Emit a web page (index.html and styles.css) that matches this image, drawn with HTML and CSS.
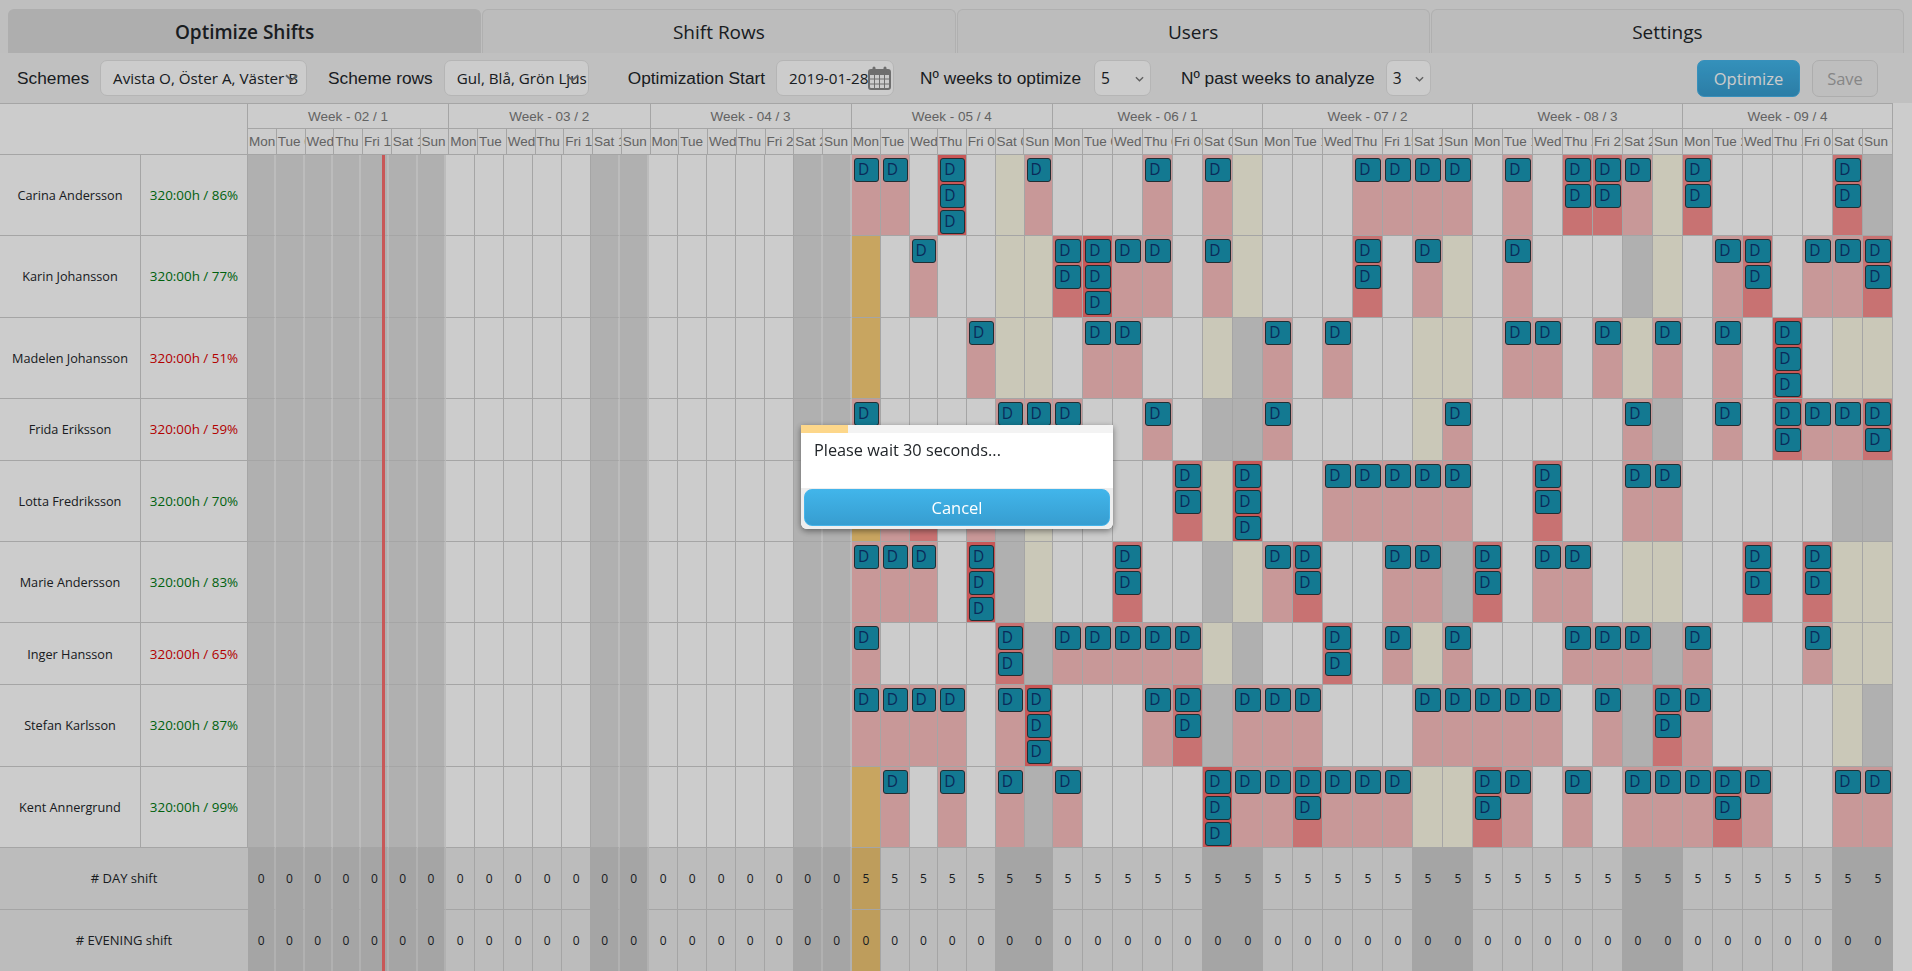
FILE: index.html
```html
<!DOCTYPE html>
<html lang="en">
<head>
    <meta charset="UTF-8">
    <meta name="viewport" content="width=device-width, initial-scale=1.0">
    <title>Optimize Shifts</title>
    <link rel="stylesheet" href="styles.css">
</head>
<body>
    <nav class="tabs">
        <a class="tab active">Optimize Shifts</a>
        <a class="tab">Shift Rows</a>
        <a class="tab">Users</a>
        <a class="tab">Settings</a>
    </nav>
    <div class="toolbar">
        <label class="label">Schemes</label>
        <div class="multi multi-schemes">
            <span class="multi-text">Avista O, Öster A, Väster B</span>
            <svg class="chevron" viewBox="0 0 14 8"><path d="M1 1l6 5.5L13 1" fill="none" stroke="#777" stroke-width="2"/></svg>
        </div>
        <label class="label">Scheme rows</label>
        <div class="multi multi-rows">
            <span class="multi-text">Gul, Blå, Grön Ljus</span>
            <svg class="chevron" viewBox="0 0 14 8"><path d="M1 1l6 5.5L13 1" fill="none" stroke="#777" stroke-width="2"/></svg>
        </div>
        <label class="label">Optimization Start</label>
        <div class="date">
            <span class="date-text">2019-01-28</span>
            <svg class="calendar" viewBox="0 0 23 24">
                <rect x="1" y="4" width="21" height="19" rx="2" fill="#fff" stroke="#8a8a8a" stroke-width="2"/>
                <rect x="1" y="4" width="21" height="5" fill="#8a8a8a"/>
                <rect x="4.5" y="0.5" width="3" height="6" rx="1.5" fill="#8a8a8a"/>
                <rect x="15.5" y="0.5" width="3" height="6" rx="1.5" fill="#8a8a8a"/>
                <path d="M1 13h21M1 18h21M6.5 9v14M11.5 9v14M16.5 9v14" stroke="#8a8a8a" stroke-width="1"/>
            </svg>
        </div>
        <label class="label">Nº weeks to optimize</label>
        <div class="select select-weeks">5
            <svg class="select-arrow" viewBox="0 0 10 6"><path d="M1 1l4 4 4-4" fill="none" stroke="#777" stroke-width="1.5"/></svg>
        </div>
        <label class="label">Nº past weeks to analyze</label>
        <div class="select select-past">3
            <svg class="select-arrow" viewBox="0 0 10 6"><path d="M1 1l4 4 4-4" fill="none" stroke="#777" stroke-width="1.5"/></svg>
        </div>
        <button class="btn btn-blue btn-optimize">Optimize</button>
        <button class="btn btn-save" disabled>Save</button>
    </div>
    <div class="schedule" id="schedule">
        <div class="now-line"></div>
    </div>
    <div class="overlay">
        <div class="dialog">
            <div class="progress"><div class="progress-fill"></div></div>
            <p class="dialog-text">Please wait 30 seconds...</p>
            <div class="dialog-actions">
                <button class="btn btn-blue btn-cancel">Cancel</button>
            </div>
        </div>
    </div>
    <script src="schedule.js"></script>
</body>
</html>
```

FILE: styles.css
```css
html, body {
    height: 100%;
    overflow: hidden;
}
body {
    font-family: "Open Sans", sans-serif;
    margin: 0;
    padding: 0;
    background-color: #fff;
    color: #212529;
}
.tabs {
    display: grid;
    grid-template-columns: repeat(4, 1fr);
    gap: 1px;
    height: 53px;
    padding: 9px 8px 0;
    box-sizing: border-box;
    background-color: #efefef;
}
.tab {
    display: flex;
    align-items: center;
    justify-content: center;
    font-size: 19px;
    border: 1px solid #dcdcdc;
    border-bottom: none;
    border-radius: 6px 6px 0 0;
    background-color: #ebebeb;
}
.tab.active {
    font-weight: 600;
    background-color: #dadada;
    border-color: #dadada;
}
.toolbar {
    display: flex;
    align-items: center;
    height: 50px;
    padding-left: 17px;
    box-sizing: border-box;
    background-color: #f1f1f1;
}
.label {
    font-family: "Liberation Sans", Arial, sans-serif;
    font-size: 17.3px;
    margin-right: 11px;
    white-space: nowrap;
}
.multi, .date, .select {
    position: relative;
    height: 36px;
    box-sizing: border-box;
    background-color: #fff;
    border: 1px solid #e3e3e3;
    border-radius: 7px;
    font-size: 15.2px;
    display: flex;
    align-items: center;
}
.multi-schemes {
    width: 207px;
    margin-right: 21px;
}
.multi-rows {
    width: 145px;
    margin-right: 39px;
}
.multi-text {
    padding-left: 12px;
    white-space: nowrap;
    overflow: hidden;
}
.chevron {
    position: absolute;
    right: 8px;
    top: 13px;
    width: 13px;
    height: 8px;
}
.multi-rows .chevron {
    right: 9px;
}
.date {
    width: 118px;
    margin-right: 26px;
    overflow: hidden;
}
.date-text {
    padding-left: 12px;
    white-space: nowrap;
}
.calendar {
    position: absolute;
    right: 2px;
    top: 5px;
    width: 23px;
    height: 24px;
}
.select {
    font-size: 15.5px;
    padding-left: 6px;
}
.select-arrow {
    position: absolute;
    right: 6px;
    top: 15px;
    width: 9px;
    height: 6px;
}
.select-weeks {
    width: 57px;
    margin-left: 2px;
    margin-right: 30px;
}
.select-past {
    width: 45px;
}
.btn {
    font-family: "Open Sans", sans-serif;
    font-size: 16.5px;
    height: 37px;
    border-radius: 7px;
    cursor: pointer;
}
.btn-blue {
    color: #fff;
    border: 1px solid #45b4ea;
    background: linear-gradient(#41b5ea, #379dd0);
}
.btn-optimize {
    width: 103px;
    margin-left: auto;
    margin-right: 12px;
}
.btn-save {
    width: 66px;
    margin-right: 34px;
    color: #a8a8a8;
    border: 1px solid #d9d9d9;
    background-color: #eee;
}
.schedule {
    position: relative;
    width: 1893px;
}
.now-line {
    position: absolute;
    left: 382px;
    top: 52px;
    bottom: -200px;
    width: 3px;
    background-color: #fb6d6d;
    z-index: 2;
}
.head {
    display: grid;
    grid-template-columns: 248px repeat(28, 28.76px) repeat(28, 30px);
    grid-template-rows: 25px 26px;
    border-top: 1px solid #cfcfcf;
    font-family: "Liberation Sans", Arial, sans-serif;
    font-size: 13.5px;
    color: #7b7b7b;
}
.corner {
    grid-column: 1;
    grid-row: 1 / span 2;
    border-right: 1px solid #cfcfcf;
    border-bottom: 1px solid #cfcfcf;
}
.week {
    grid-column: span 7;
    grid-row: 1;
    display: flex;
    align-items: center;
    justify-content: center;
    border-right: 1px solid #cfcfcf;
    border-bottom: 1px solid #cfcfcf;
}
.day {
    grid-row: 2;
    min-width: 0;
    overflow: hidden;
    white-space: nowrap;
    padding-left: 1px;
    line-height: 25px;
    border-right: 1px solid #cfcfcf;
    border-bottom: 1px solid #cfcfcf;
}
.row {
    display: grid;
    grid-template-columns: 141px 107px repeat(7, 28.3px) repeat(14, 29.01px) repeat(7, 28.76px) repeat(28, 30px);
    height: 62px;
}
.row-tall {
    height: 81.25px;
}
.name, .hours {
    display: flex;
    align-items: center;
    justify-content: center;
    font-size: 12.7px;
    border-right: 1px solid #cfcfcf;
    border-bottom: 1px solid #cfcfcf;
}
.hours {
    white-space: nowrap;
    font-size: 13.4px;
}
.hours.ok {
    color: #007a12;
}
.hours.low {
    color: #e00000;
}
.cell {
    box-sizing: border-box;
    min-width: 0;
    padding: 3px 1px 1px 2px;
    border-right: 1px solid #cfcfcf;
    border-bottom: 1px solid #cfcfcf;
}
.cell.grey {
    background-color: #dcdcdc;
}
.cell.past {
    border-right: 2px solid #ececec;
}
.cell.khaki {
    background-color: #fdfae6;
}
.cell.orange {
    background-color: #fbcf79;
}
.cell.one {
    background-color: #fbbebe;
}
.cell.two {
    background-color: #fb8f8f;
}
.cell.three {
    background-color: #fb6d6d;
}
.shift {
    height: 24px;
    box-sizing: border-box;
    background-color: #1898b6;
    border: 1px solid #2a3a40;
    border-radius: 3px;
    padding-left: 3px;
    font-size: 15.5px;
    line-height: 20px;
    color: #0d3570;
}
.shift + .shift {
    margin-top: 2px;
}
.summary {
    height: 62px;
    background-color: #ebebeb;
}
.summary-label {
    grid-column: span 2;
    display: flex;
    align-items: center;
    justify-content: center;
    font-size: 13px;
    border-bottom: 1px solid #cfcfcf;
}
.count {
    display: flex;
    align-items: center;
    justify-content: center;
    min-width: 0;
    font-size: 12px;
    border-right: 1px solid #cfcfcf;
    border-bottom: 1px solid #cfcfcf;
}
.count.grey {
    background-color: #cfcfcf;
}
.count.past {
    border-right: 2px solid #dedede;
}
.count.orange {
    background-color: #eec573;
}
.overlay {
    position: fixed;
    top: 0;
    left: 0;
    right: 0;
    bottom: 0;
    z-index: 5;
    display: flex;
    justify-content: center;
    align-items: flex-start;
    padding: 425px 0 0 2px;
    box-sizing: border-box;
    background-color: rgba(0, 0, 0, 0.2);
}
.dialog {
    width: 312px;
    height: 104px;
    background-color: #fff;
    border-radius: 0 0 6px 6px;
    box-shadow: 0 2px 6px rgba(0, 0, 0, 0.45);
    overflow: hidden;
    display: flex;
    flex-direction: column;
}
.progress {
    height: 8px;
    background-color: #f3f3f3;
}
.progress-fill {
    width: 15%;
    height: 100%;
    background-color: #fdd78a;
}
.dialog-text {
    flex: 1;
    margin: 0;
    padding: 6px 13px;
    font-size: 16.3px;
    color: #212529;
}
.dialog-actions {
    height: 41px;
    box-sizing: border-box;
    padding: 1px 3px 3px;
    background-color: #eee;
}
.btn-cancel {
    width: 100%;
    height: 100%;
    border-radius: 8px;
}
```

FILE: schedule.js
```js
const weeks = [
    { label: 'Week - 02 / 1', start: new Date(2019, 0, 7) },
    { label: 'Week - 03 / 2', start: new Date(2019, 0, 14) },
    { label: 'Week - 04 / 3', start: new Date(2019, 0, 21) },
    { label: 'Week - 05 / 4', start: new Date(2019, 0, 28) },
    { label: 'Week - 06 / 1', start: new Date(2019, 1, 4) },
    { label: 'Week - 07 / 2', start: new Date(2019, 1, 11) },
    { label: 'Week - 08 / 3', start: new Date(2019, 1, 18) },
    { label: 'Week - 09 / 4', start: new Date(2019, 1, 25) }
];
const dayNames = ['Mon', 'Tue', 'Wed', 'Thu', 'Fri', 'Sat', 'Sun'];

// . free, k khaki, g grey, o orange, digit = number of D shifts (weeks 05 - 09)
const staff = [
    ['Carina Andersson', '86', true, '11.3.k1...1.1k...1111.1.221k2....2g'],
    ['Karin Johansson', '77', true, 'o.1..kk2311.1k...2.1k.1...gk.12.112'],
    ['Madelen Johansson', '51', false, 'o...1kk.11..kg1.1..kk.11.1k1.1.3.kk'],
    ['Frida Eriksson', '59', false, '1....111..1.gg1....k1.....1g.1.2112'],
    ['Lotta Fredriksson', '70', true, 'o12.1gk....2k3..11111..2..11.....gg'],
    ['Marie Andersson', '83', true, '111.3gk..2..gk12..11g2.11.kk..2.2kk'],
    ['Inger Hansson', '65', false, '1....2g11111kg..2.1k1...111g1...1kk'],
    ['Stefan Karlsson', '87', true, '1111.13...12g111...11111.1g21....kg'],
    ['Kent Annergrund', '99', true, 'o1.1.1g1....3112111kk21.1.11121..11']
];

const schedule = document.getElementById('schedule');

function pad(n) {
    return n < 10 ? '0' + n : '' + n;
}

function buildHead() {
    let html = '<div class="corner"></div>';
    weeks.forEach(week => {
        html += `<div class="week">${week.label}</div>`;
    });
    weeks.forEach(week => {
        dayNames.forEach((name, i) => {
            const date = new Date(week.start.getTime());
            date.setDate(date.getDate() + i);
            html += `<div class="day">${name} ${pad(date.getDate())}</div>`;
        });
    });
    return `<div class="head">${html}</div>`;
}

function pastClass(dayIndex) {
    const weekDay = dayIndex % 7;
    return dayIndex < 7 || weekDay > 4 ? ' grey past' : '';
}

function buildCell(code) {
    const classes = { k: ' khaki', g: ' grey', o: ' orange', 1: ' one', 2: ' two', 3: ' three' };
    const count = Number(code) || 0;
    return `<div class="cell${classes[code] || ''}">${'<div class="shift">D</div>'.repeat(count)}</div>`;
}

function buildRow(person) {
    const [name, percent, ok, codes] = person;
    let cells = '';
    for (let i = 0; i < 21; i++) {
        const past = pastClass(i);
        cells += `<div class="cell${past}"></div>`;
    }
    codes.split('').forEach(code => {
        cells += buildCell(code);
    });
    const tall = codes.includes('3') ? ' row-tall' : '';
    return `<div class="row${tall}">
        <div class="name">${name}</div>
        <div class="hours ${ok ? 'ok' : 'low'}">320:00h / ${percent}%</div>
        ${cells}
    </div>`;
}

function buildSummary(label, value) {
    let cells = `<div class="summary-label">${label}</div>`;
    for (let i = 0; i < 56; i++) {
        let cls = i < 21 ? pastClass(i) : (i % 7 > 4 ? ' grey' : '');
        if (i === 21) {
            cls = ' orange';
        }
        cells += `<div class="count${cls}">${i >= 21 ? value : 0}</div>`;
    }
    return `<div class="row summary">${cells}</div>`;
}

schedule.insertAdjacentHTML('beforeend',
    buildHead() + staff.map(buildRow).join('') + buildSummary('# DAY shift', 5) + buildSummary('# EVENING shift', 0));
```
